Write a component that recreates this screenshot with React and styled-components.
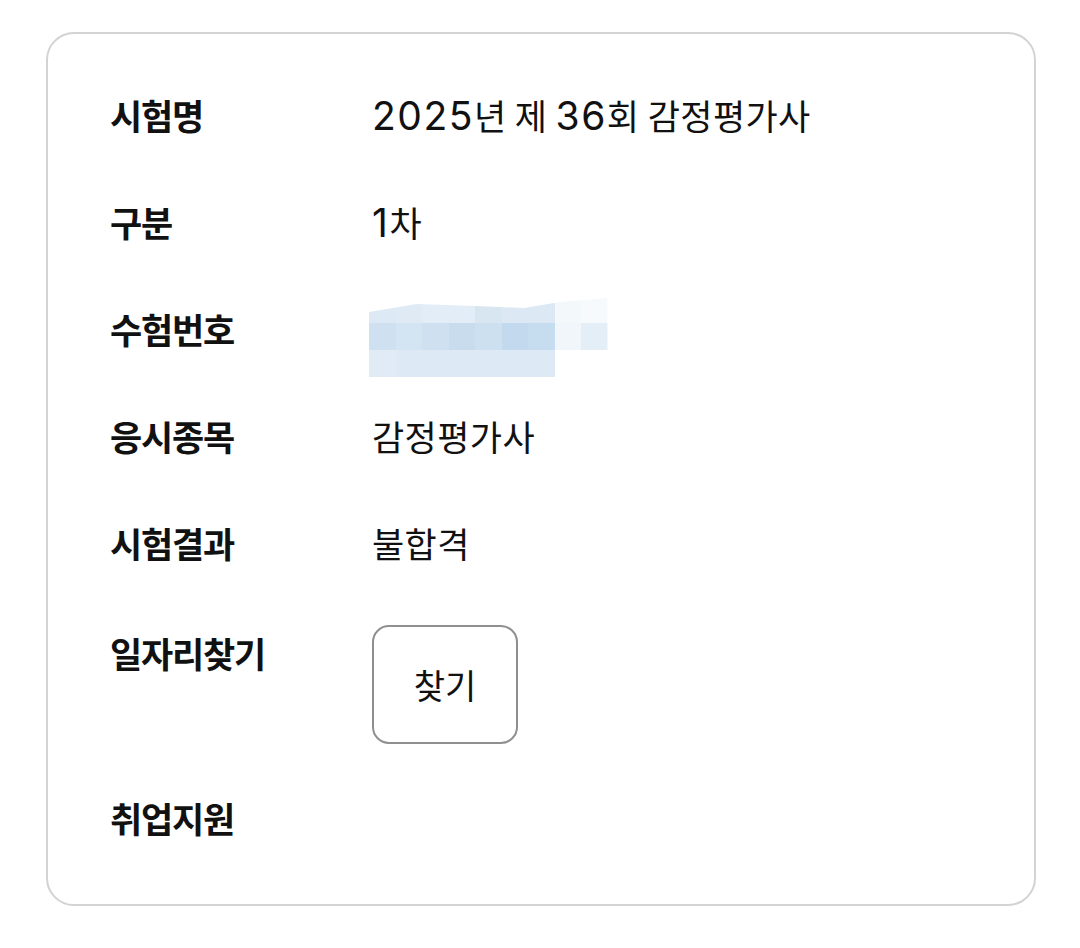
import styled, { createGlobalStyle } from 'styled-components';

const GlobalStyle = createGlobalStyle`
    html, body {
        margin: 0;
        padding: 0;
        background: #ffffff;
    }
    body {
        font-family: "Noto Sans CJK KR", "Noto Sans", sans-serif;
        color: #111111;
    }
`;

// 블러 처리된 수험번호 (픽셀 모자이크)
const BLUR_ROWS = [
    ['#dde9f4', '#dfeaf5', '#e2edf7', '#e2edf7', '#d8e6f2', '#dce9f4', '#dce9f4', '#f3f8fb', '#f6fafd'],
    ['#cfe1f0', '#d3e4f2', '#cfe1f0', '#c8dcee', '#cde0f0', '#c3daee', '#c6dcef', '#f0f6fa', '#e3eef7'],
    ['#e0ebf5', '#dde9f4', '#dde9f4', '#dde9f4', '#dde9f4', '#dde9f4', '#dde9f4', null, null],
];

const rows = [
    { label: '시험명', value: '2025년 제 36회 감정평가사' },
    { label: '구분', value: '1차' },
    { label: '수험번호', blur: true },
    { label: '응시종목', value: '감정평가사' },
    { label: '시험결과', value: '불합격' },
    { label: '일자리찾기', button: '찾기' },
    { label: '취업지원' },
];

// 숫자 부분만 따로 감싸서 폭을 맞춤
const renderValue = (text) =>
    text.split(/(\d+)/).map((part, i) =>
        /^\d+$/.test(part) ? <Num key={i}>{part}</Num> : part
    );

const App = () => {
    return (
        <Page>
            <GlobalStyle />
            <Card>
                {rows.map((row) => (
                    <Row key={row.label} $top={!!row.button}>
                        <Label>{row.label}</Label>
                        {row.value && <Value>{renderValue(row.value)}</Value>}
                        {row.button && <FindButton type="button">{row.button}</FindButton>}
                        {row.blur && (
                            <Mosaic>
                                {BLUR_ROWS.map((line, i) =>
                                    line.map((c, j) => <Cell key={`${i}-${j}`} $color={c} />)
                                )}
                            </Mosaic>
                        )}
                    </Row>
                ))}
            </Card>
        </Page>
    );
};

export default App;

const Page = styled.div`
    width: 1080px;
    height: 948px;
    padding: 32px 0 0 46px;
    box-sizing: border-box;
`;

const Card = styled.div`
    width: 990px;
    height: 874px;
    box-sizing: border-box;
    border: 2px solid #d3d3d3;
    border-radius: 28px;
    background: #ffffff;
    padding: 27px 62px 0;
`;

const Row = styled.div`
    display: grid;
    grid-template-columns: 262px 1fr;
    align-items: ${(p) => (p.$top ? 'start' : 'center')};
    padding: ${(p) => (p.$top ? '29px 0 20px' : '26px 0')};
    min-height: 55px;
`;

const Label = styled.div`
    font-size: 35px;
    font-weight: 700;
    line-height: 55px;
    letter-spacing: -1.2px;
`;

const Value = styled.div`
    font-size: 35px;
    font-weight: 400;
    line-height: 55px;
    letter-spacing: 0.4px;
    white-space: nowrap;
`;

const Num = styled.span`
    font-family: Inter, "Noto Sans CJK KR", sans-serif;
    font-size: 39px;
    font-weight: 400;
    line-height: 1;
    letter-spacing: 1.5px;
`;

const FindButton = styled.button`
    width: 146px;
    height: 119px;
    border: 2px solid #8f8f8f;
    border-radius: 17px;
    background: #ffffff;
    font-family: "Noto Sans CJK KR", "Noto Sans", sans-serif;
    font-size: 34px;
    color: #111111;
    padding: 0;
    cursor: pointer;
`;

const Mosaic = styled.div`
    display: grid;
    grid-template-columns: repeat(9, 26.5px);
    grid-auto-rows: 27px;
    width: 238.5px;
    margin: -5px 0 -21px -3px;
    clip-path: polygon(0 16px, 20% 8px, 45% 10px, 65% 12px, 80% 6px, 100% 2px, 100% 100%, 0 100%);
`;

const Cell = styled.div`
    background: ${(p) => p.$color || 'transparent'};
`;
